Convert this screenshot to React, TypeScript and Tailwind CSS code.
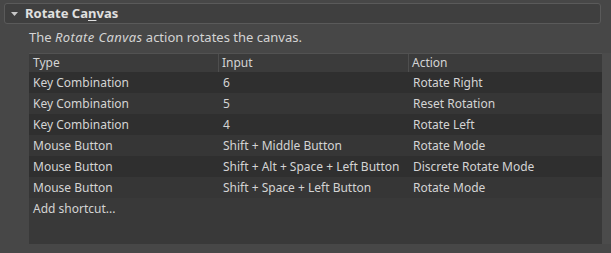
const rows = [
  ["Key Combination", "6", "Rotate Right"],
  ["Key Combination", "5", "Reset Rotation"],
  ["Key Combination", "4", "Rotate Left"],
  ["Mouse Button", "Shift + Middle Button", "Rotate Mode"],
  ["Mouse Button", "Shift + Alt + Space + Left Button", "Discrete Rotate Mode"],
  ["Mouse Button", "Shift + Space + Left Button", "Rotate Mode"],
];

export default function App() {
  return (
    <div
      className="h-[253px] w-[611px] overflow-hidden bg-[#474747] pt-[3px] text-[12px] text-[#d4d4d4]"
      style={{ fontFamily: '"Noto Sans", "Open Sans", sans-serif' }}
    >
      <div className="ml-[4px] mr-[10px] flex h-[21px] items-center rounded-[3px] border border-[#5a5a5a] bg-[#3f3f3f]">
        <svg width="7" height="4" viewBox="0 0 7 4" className="ml-[6px] mr-[7px]">
          <path d="M0 0 L7 0 L3.5 4 Z" fill="#c8c8c8" />
        </svg>
        <span className="text-[13px] font-bold text-[#e0e0e0]">
          Rotate Ca<span className="underline underline-offset-2">n</span>vas
        </span>
      </div>
      <p className="ml-[29px] mt-[4px] h-[19px] text-[13px] leading-[19px]">
        The <i className="tracking-[0.4px]">Rotate Canvas</i> action rotates the canvas.
      </p>
      <div className="mt-[6px] flex">
        <div className="ml-[29px] h-[191px] w-[573px] border-t border-[#525252] bg-[#393939]">
          <div className="grid h-[18px] grid-cols-[190px_190px_1fr] bg-[#3b3b3b] leading-[18px]">
            <div className="border-r border-[#4e4e4e] pl-[4px]">Type</div>
            <div className="border-r border-[#4e4e4e] pl-[3px]">Input</div>
            <div className="pl-[3px]">Action</div>
          </div>
          {rows.map((r, i) => (
            <div
              key={i}
              className={`grid h-[21px] grid-cols-[190px_190px_1fr] leading-[21px] ${
                i % 2 === 0 ? "bg-[#2f2f2f]" : "bg-[#363636]"
              }`}
            >
              <div className="pl-[4px]">{r[0]}</div>
              <div className="pl-[4px]">{r[1]}</div>
              <div className="pl-[4px]">{r[2]}</div>
            </div>
          ))}
          <div className="h-[21px] pl-[4px] leading-[21px]">Add shortcut...</div>
        </div>
        <div className="h-[191px] w-[9px] bg-[#4b4b4b]" />
      </div>
    </div>
  );
}
